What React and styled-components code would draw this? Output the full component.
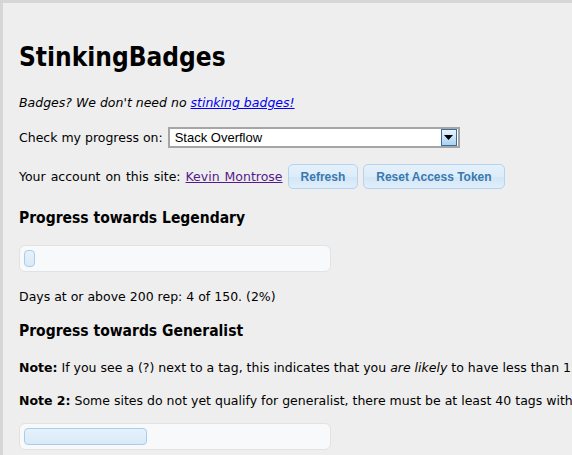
import styled, { createGlobalStyle } from "styled-components";

const GlobalStyle = createGlobalStyle`
  html, body {
    margin: 0;
    padding: 0;
    background: #eeeeee;
    overflow: hidden;
  }
  body {
    font-family: "DejaVu Sans", Tahoma, sans-serif;
    font-size: 12.5px;
    color: #000;
  }
`;

export default function App() {
  return (
    <>
      <GlobalStyle />
      <Page>
        <Title>StinkingBadges</Title>
        <Tagline>
          Badges? We don't need no <a href="#badges">stinking badges!</a>
        </Tagline>
        <Row $top="16px">
          <span>Check my progress on:</span>
          <SiteSelect>
            <span>Stack Overflow</span>
            <SelectArrow>
              <svg width="9" height="5" viewBox="0 0 9 5">
                <path d="M0 0h9L4.5 5z" fill="#000" />
              </svg>
            </SelectArrow>
          </SiteSelect>
        </Row>
        <Row $gap="5px" $top="16px">
          <AccountText>
            Your account on this site: <AccountLink href="#user">Kevin Montrose</AccountLink>
          </AccountText>
          <Button type="button">Refresh</Button>
          <Button type="button">Reset Access Token</Button>
        </Row>

        <Section $top="18px">Progress towards Legendary</Section>
        <ProgressBar $top="16px">
          <ProgressFill style={{ width: "11px" }} />
        </ProgressBar>
        <Para>Days at or above 200 rep: 4 of 150. (2%)</Para>

        <Section $top="15px">Progress towards Generalist</Section>
        <Note $top="18px">
          <b>Note:</b> If you see a (?) next to a tag, this indicates that you{" "}
          <i>are likely</i> to have less than 15 answers in that tag.
        </Note>
        <Note $top="17px">
          <b>Note 2:</b> Some sites do not yet qualify for generalist, there must be at least 40 tags with 200 questions.
        </Note>
        <ProgressBar $top="14px">
          <ProgressFill style={{ width: "123px" }} />
        </ProgressBar>
      </Page>
    </>
  );
}

const Page = styled.div`
  min-height: 455px;
  box-sizing: border-box;
  border-top: 3px solid #d6d6d6;
  border-left: 3px solid #d6d6d6;
  padding: 26px 0 0 16px;
  width: 900px;
`;

const Title = styled.h1`
  margin: 12px 0 0;
  font-family: "DejaVu Sans Condensed", "DejaVu Sans", sans-serif;
  font-size: 26px;
  line-height: 32px;
  font-weight: bold;
`;

const Tagline = styled.p`
  margin: 22px 0 0;
  font-style: italic;
  line-height: 16px;

  a {
    color: #0000ee;
  }
`;

const Row = styled.div`
  display: flex;
  align-items: center;
  gap: ${({ $gap }) => $gap || "5px"};
  margin-top: ${({ $top }) => $top};
  line-height: 16px;
`;

const AccountText = styled.span`
  word-spacing: 1px;
`;

const SiteSelect = styled.div`
  box-sizing: border-box;
  display: flex;
  align-items: center;
  justify-content: space-between;
  width: 292px;
  height: 21px;
  padding: 0 1px 0 5px;
  background: #fff;
  border: 2px solid #a5a5a5;
  font-family: "Liberation Sans", Arial, sans-serif;
  font-size: 13px;
`;

const SelectArrow = styled.span`
  box-sizing: border-box;
  display: flex;
  align-items: center;
  justify-content: center;
  width: 16px;
  height: 17px;
  border: 1px solid #3c6d99;
  background: linear-gradient(#eaf4fc, #a9d2f2);
`;

const AccountLink = styled.a`
  color: #551a8b;
`;

const Button = styled.button`
  box-sizing: border-box;
  height: 25px;
  padding: 0 12px;
  border: 1px solid #b3d3ee;
  border-radius: 5px;
  background: linear-gradient(#e5f1fb 0%, #dcecf9 50%, #d2e6f6 51%, #e0eefa 100%);
  color: #3a78b0;
  font-family: "Liberation Sans", Arial, sans-serif;
  font-size: 12px;
  font-weight: bold;
  cursor: pointer;
`;

const Section = styled.h2`
  margin: ${({ $top }) => $top} 0 0;
  font-family: "DejaVu Sans Condensed", "DejaVu Sans", sans-serif;
  font-size: 15.5px;
  line-height: 22px;
  font-weight: bold;
`;

const ProgressBar = styled.div`
  box-sizing: border-box;
  width: 312px;
  height: 27px;
  margin-top: ${({ $top }) => $top};
  padding: 4px;
  background: #f8f9fb;
  border: 1px solid #e2e2e2;
  border-radius: 6px;
`;

const ProgressFill = styled.div`
  box-sizing: border-box;
  height: 100%;
  background: linear-gradient(#e6f1fb, #d9eaf8);
  border: 1px solid #a8cdec;
  border-radius: 4px;
`;

const Para = styled.p`
  margin: 17px 0 0;
  line-height: 16px;
`;

const Note = styled.p`
  margin: ${({ $top }) => $top} 0 0;
  line-height: 16px;
  white-space: nowrap;
`;
